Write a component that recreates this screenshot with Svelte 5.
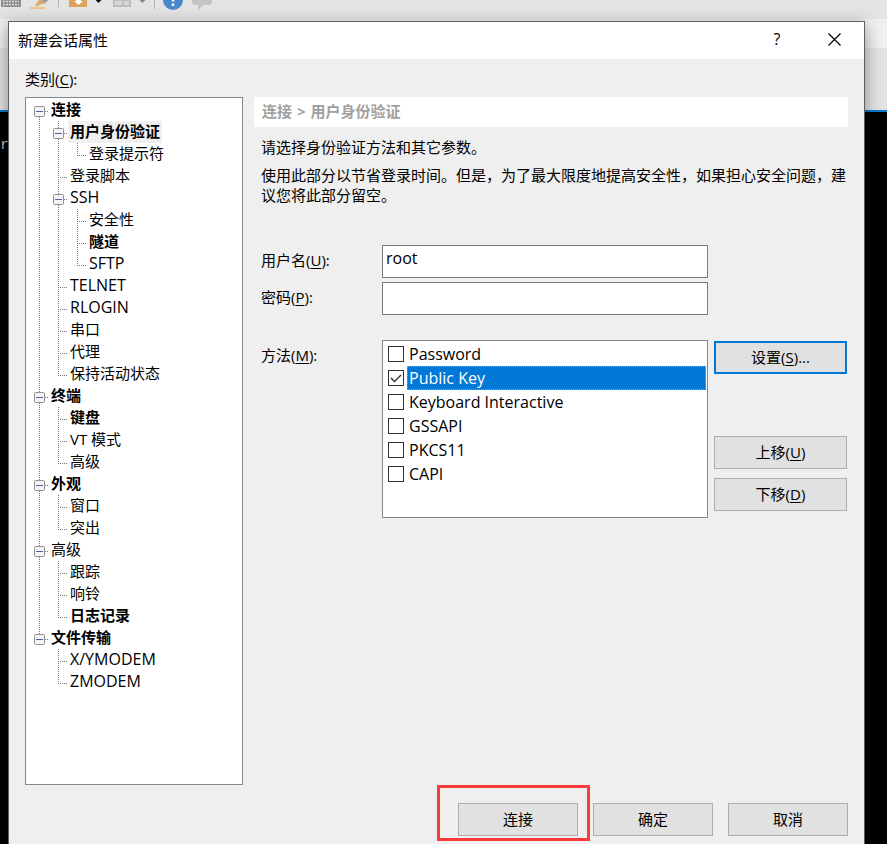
<script lang="ts">
  type TreeItem = { name: string; bold?: boolean; latin?: boolean; children?: TreeItem[] };
  type Row = { key: string; item: TreeItem; guides: boolean[]; first: boolean; last: boolean };

  const categories: TreeItem[] = [
    {
      name: '连接',
      bold: true,
      children: [
        { name: '用户身份验证', bold: true, children: [{ name: '登录提示符' }] },
        { name: '登录脚本' },
        {
          name: 'SSH',
          latin: true,
          children: [
            { name: '安全性' },
            { name: '隧道', bold: true },
            { name: 'SFTP', latin: true }
          ]
        },
        { name: 'TELNET', latin: true },
        { name: 'RLOGIN', latin: true },
        { name: '串口' },
        { name: '代理' },
        { name: '保持活动状态' }
      ]
    },
    {
      name: '终端',
      bold: true,
      children: [{ name: '键盘', bold: true }, { name: 'VT 模式' }, { name: '高级' }]
    },
    { name: '外观', bold: true, children: [{ name: '窗口' }, { name: '突出' }] },
    {
      name: '高级',
      children: [{ name: '跟踪' }, { name: '响铃' }, { name: '日志记录', bold: true }]
    },
    {
      name: '文件传输',
      bold: true,
      children: [
        { name: 'X/YMODEM', latin: true },
        { name: 'ZMODEM', latin: true }
      ]
    }
  ];

  let collapsed: Record<string, boolean> = $state({});
  let selected = $state('/连接/用户身份验证');
  let username = $state('root');
  let password = $state('');
  let current = $state('Public Key');

  let methods = $state([
    { name: 'Password', checked: false },
    { name: 'Public Key', checked: true },
    { name: 'Keyboard Interactive', checked: false },
    { name: 'GSSAPI', checked: false },
    { name: 'PKCS11', checked: false },
    { name: 'CAPI', checked: false }
  ]);

  // guides: 每一级祖先是否还要继续画竖线
  function flatten(items: TreeItem[], path: string, guides: boolean[]): Row[] {
    return items.flatMap((item, i) => {
      const key = `${path}/${item.name}`;
      const last = i === items.length - 1;
      const row = { key, item, guides, first: !path && i === 0, last };
      if (!item.children || collapsed[key]) return [row];
      return [row, ...flatten(item.children, key, [...guides, !last])];
    });
  }

  let rows = $derived(flatten(categories, '', []));

  // 上移 / 下移当前验证方法
  function move(step: number) {
    const from = methods.findIndex((m) => m.name === current);
    const to = from + step;
    if (from < 0 || to < 0 || to >= methods.length) return;
    [methods[from], methods[to]] = [methods[to], methods[from]];
  }
</script>

<div class="desktop">
  <div class="main-window">
    <div class="toolbar">
      <svg width="214" height="19" viewBox="0 0 214 19" aria-hidden="true">
        <rect x="1" y="-6" width="20" height="13" rx="1" fill="#8e8e8e" />
        <path d="M3 1.5h16M3 4.5h16" stroke="#dcdcdc" stroke-width="1.5" stroke-dasharray="2 1" />
        <path d="M40 -1l5-3 4 4-5 4z" fill="#a3a3a3" />
        <path d="M40 -1l4 4-9 4 1-3z" fill="#e0a95f" />
        <path d="M30 8h15" stroke="#f2c48b" stroke-width="2" />
        <path d="M58.5 0v7M154.5 0v9" stroke="#b4b4b4" />
        <rect x="69" y="-6" width="18" height="13" fill="#dda35b" />
        <path d="M76 -2h5v3h2l-4.5 4L74 1h2z" fill="#fff" />
        <path d="M95.500 0h6l-3 3z" fill="#111" />
        <path d="M139.500 0h6l-3 3z" fill="#888" />
        <rect x="113" y="-6" width="18" height="13" fill="#bdbdbd" />
        <path d="M115 1h7v4h-7zM124 1h5v4h-5z" fill="#d6d6d6" />
        <circle cx="173" cy="0" r="10" fill="#4788cb" />
        <path d="M173 0v1.500M173 3.500v2.500" stroke="#fff" stroke-width="2.500" />
        <path d="M192 -3h20v5q0 3-3 3h-6l-5 5V5h-3q-3 0-3-3z" fill="#c4c4c4" />
      </svg>
    </div>
    <div class="address-bar"></div>
    <div class="tab-bar"></div>
    <div class="terminal">ra</div>
  </div>

  <div class="dialog" role="dialog" aria-labelledby="dialog-title">
    <div class="title-bar">
      <h1 id="dialog-title">新建会话属性</h1>
      <button class="title-btn help" aria-label="帮助">?</button>
      <button class="title-btn close" aria-label="关闭">
        <svg width="13" height="13" viewBox="0 0 13 13" aria-hidden="true">
          <path d="M.5.5l12 12M12.5.5l-12 12" stroke="#000" stroke-width="1.2" />
        </svg>
      </button>
    </div>

    <div class="body">
      <div class="category-label" id="category-label">类别(<u>C</u>):</div>
      <div class="columns">
        <ul class="tree" role="tree" aria-labelledby="category-label">
          {#each rows as row (row.key)}
            <li class="tree-row" role="treeitem" aria-selected={row.key === selected}>
              {#each row.guides as guide}
                <svg class="guide" width="19" height="22" aria-hidden="true">
                  {#if guide}
                    <path class="dots" d="M9.5 0V22" />
                  {/if}
                </svg>
              {/each}
              {#if row.item.children}
                <button
                  class="expander"
                  aria-label={collapsed[row.key] ? '展开' : '折叠'}
                  onclick={() => (collapsed[row.key] = !collapsed[row.key])}
                >
                  <svg class="guide" width="19" height="22" aria-hidden="true">
                    {#if !row.first}
                      <path class="dots" d="M9.5 0V12" />
                    {/if}
                    {#if !row.last}
                      <path class="dots" d="M9.5 12V22" />
                    {/if}
                    <path class="dots" d="M9 12.5H19" />
                    <rect x="4.5" y="7.5" width="10" height="10" rx="1" fill="#f4f4f4" stroke="#919191" />
                    <path d="M6 12.5h7" stroke="#4b63a7" />
                    {#if collapsed[row.key]}
                      <path d="M9.5 9v7" stroke="#4b63a7" />
                    {/if}
                  </svg>
                </button>
              {:else}
                <svg class="guide" width="19" height="22" aria-hidden="true">
                  <path class="dots" d={row.last ? 'M9.5 0V12' : 'M9.5 0V22'} />
                  <path class="dots" d="M9 12.5H19" />
                </svg>
              {/if}
              <button
                class="tree-name"
                class:bold={row.item.bold}
                class:latin={row.item.latin}
                class:selected={row.key === selected}
                onclick={() => (selected = row.key)}>{row.item.name}</button
              >
            </li>
          {/each}
        </ul>

        <div class="panel">
          <h2>连接 <span>&gt;</span> 用户身份验证</h2>
          <div class="panel-content">
            <p>请选择身份验证方法和其它参数。</p>
            <p>
              使用此部分以节省登录时间。但是，为了最大限度地提高安全性，如果担心安全问题，建议您将此部分留空。
            </p>

            <div class="form">
              <label for="username">用户名(<u>U</u>):</label>
              <input id="username" class="text-input" type="text" bind:value={username} />

              <label class="row-password" for="password">密码(<u>P</u>):</label>
              <input
                id="password"
                class="text-input row-password"
                type="password"
                bind:value={password}
              />

              <div class="method-label" id="method-label">方法(<u>M</u>):</div>
              <div class="method-list" role="group" aria-labelledby="method-label">
                {#each methods as method (method.name)}
                  <label class="method">
                    <input
                      type="checkbox"
                      bind:checked={method.checked}
                      onfocus={() => (current = method.name)}
                    />
                    <span class:current={method.name === current}>{method.name}</span>
                  </label>
                {/each}
              </div>
              <div class="method-actions">
                <button class="btn default">设置(<u>S</u>)...</button>
                <div class="move-actions">
                  <button class="btn" onclick={() => move(-1)}>上移(<u>U</u>)</button>
                  <button class="btn" onclick={() => move(1)}>下移(<u>D</u>)</button>
                </div>
              </div>
            </div>
          </div>
        </div>
      </div>

      <div class="footer">
        <div class="marked">
          <button class="btn">连接</button>
        </div>
        <button class="btn">确定</button>
        <button class="btn">取消</button>
      </div>
    </div>
  </div>
</div>

<style>
  :global(body) {
    margin: 0;
    background: #000;
  }
  .desktop {
    display: grid;
    min-height: 100vh;
    overflow: hidden;
    font-family: 'Open Sans', 'Noto Sans CJK SC', sans-serif;
    font-size: 15px;
    line-height: 20px;
    color: #000;
  }
  .desktop * {
    box-sizing: border-box;
  }
  .main-window,
  .dialog {
    grid-area: 1 / 1;
    display: flex;
    flex-direction: column;
    min-width: 0;
  }
  .toolbar {
    height: 19px;
    background: #e4e4e4;
  }
  .toolbar svg {
    display: block;
  }
  .address-bar {
    height: 29px;
    background: #f0f0f0;
  }
  .tab-bar {
    height: 64px;
    background: #e3e3e3;
    border-bottom: 2px solid #0a7acb;
  }
  .terminal {
    flex: 1;
    padding-top: 24px;
    background: #000;
    color: #b8b8b8;
    font-family: 'Liberation Mono', monospace;
  }

  .dialog {
    z-index: 1;
    margin: 21px 22px 0 8px;
    border: 1px solid #5f6061;
    border-bottom: none;
    background: #efefef;
    box-shadow: 0 4px 16px rgba(0, 0, 0, 0.4);
  }
  .title-bar {
    display: flex;
    align-items: center;
    height: 37px;
    padding: 0 0 2px 9px;
    background: #fff;
  }
  h1 {
    flex: 1;
    margin: 0;
    font-size: 15px;
    font-weight: 400;
  }
  button {
    font: inherit;
    color: inherit;
    padding: 0;
  }
  .title-btn {
    display: flex;
    align-items: center;
    justify-content: center;
    height: 35px;
    border: none;
    background: none;
  }
  .title-btn.help {
    width: 54px;
    padding-bottom: 2px;
    font-size: 16px;
  }
  .title-btn.close {
    width: 60px;
  }

  .body {
    flex: 1;
    display: flex;
    flex-direction: column;
    padding: 10px 16px 8px;
  }
  .category-label {
    margin-bottom: 8px;
  }
  .columns {
    flex: 1;
    display: grid;
    grid-template-columns: 218px 1fr;
    gap: 11px;
  }
  u {
    text-underline-offset: 2px;
  }

  .tree {
    margin: 0;
    padding: 1px 4px;
    list-style: none;
    background: #fff;
    border: 1px solid #828790;
  }
  .tree-row {
    display: flex;
    height: 22px;
  }
  .guide {
    display: block;
    flex: none;
  }
  .dots {
    fill: none;
    stroke: #777;
    stroke-dasharray: 1 1;
    shape-rendering: crispEdges;
  }
  .expander {
    border: none;
    background: none;
  }
  .tree-name {
    padding: 0 2px 2px;
    border: none;
    background: none;
    line-height: 20px;
    white-space: nowrap;
  }
  .tree-name.bold {
    font-weight: 700;
  }
  .tree-name.latin {
    font-size: 16px;
  }
  .tree-name.selected {
    background: #efefef;
  }

  h2 {
    margin: 0;
    padding: 0 8px 2px;
    background: #fff;
    color: #a0a0a0;
    font-size: 15px;
    font-weight: 700;
    line-height: 28px;
  }
  h2 span {
    padding: 0 1px;
  }
  .panel-content {
    padding: 10px 1px 0 7px;
  }
  p {
    margin: 0 0 8px;
  }
  .form {
    display: grid;
    grid-template-columns: 121px 1fr 133px;
    align-items: center;
    margin-top: 40px;
    padding-right: 6px;
  }
  .form > label,
  .method-label {
    grid-column: 1;
  }
  .form > label {
    padding-bottom: 3px;
  }
  .text-input {
    grid-column: 2;
    width: 100%;
    height: 33px;
    padding: 0 3px 7px;
    border: 1px solid #7a7a7a;
    background: #fff;
    color: #000;
    font: inherit;
    font-size: 16px;
    outline: none;
  }
  .row-password {
    margin-top: 4px;
  }
  .method-label,
  .method-list,
  .method-actions {
    align-self: start;
    margin-top: 25px;
  }
  .method-label {
    padding-top: 5px;
  }
  .method-list {
    height: 178px;
    padding: 1px;
    border: 1px solid #828790;
    background: #fff;
    font-size: 16px;
  }
  .method {
    display: flex;
    align-items: center;
    gap: 3px;
    height: 24px;
    padding-left: 4px;
  }
  .method input {
    appearance: none;
    flex: none;
    width: 16px;
    height: 16px;
    margin: 0;
    border: 1px solid #333;
    background: #fff;
  }
  .method input:checked {
    background: #fff
      url("data:image/svg+xml,%3Csvg xmlns='http://www.w3.org/2000/svg' viewBox='0 0 14 14'%3E%3Cpath d='M2 7l3.5 3.5L12 4' fill='none' stroke='%23333' stroke-width='1.4'/%3E%3C/svg%3E");
  }
  .method span {
    flex: 1;
    padding: 0 1px;
    border: 1px solid transparent;
    line-height: 22px;
  }
  .method span.current {
    border: 1px dotted #e08a3c;
    background: #0078d7;
    color: #fff;
  }
  .method-actions {
    display: flex;
    flex-direction: column;
    justify-content: space-between;
    height: 178px;
    margin-left: 6px;
    margin-right: -6px;
    padding: 1px 0 7px;
  }
  .move-actions {
    display: flex;
    flex-direction: column;
    gap: 9px;
  }
  .btn {
    width: 100%;
    height: 33px;
    padding-bottom: 2px;
    border: 1px solid #adadad;
    background: #e1e1e1;
  }
  .btn.default {
    border: 2px solid #0078d7;
  }

  .footer {
    display: flex;
    justify-content: flex-end;
    gap: 15px;
    margin-top: 18px;
  }
  .footer .btn {
    width: 120px;
  }
  /* 红框标出要点击的按钮 */
  .marked {
    position: relative;
  }
  .marked::after {
    content: '';
    position: absolute;
    top: -18px;
    right: -12px;
    bottom: -5px;
    left: -21px;
    border: 3px solid #fb3a3a;
    pointer-events: none;
  }
</style>
